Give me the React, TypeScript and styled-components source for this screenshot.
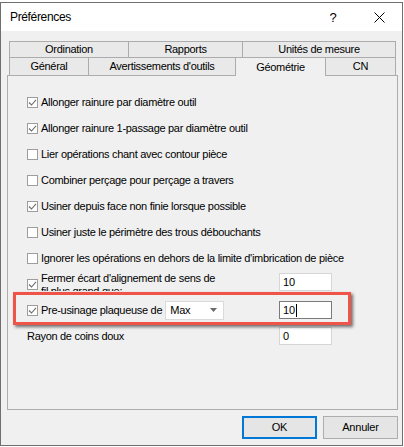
import React from "react";
import styled, { createGlobalStyle } from "styled-components";

const Global = createGlobalStyle`
  html, body { margin: 0; padding: 0; background: #ffffff; }
  body { font-family: "Liberation Sans", Arial, sans-serif; }
  * { box-sizing: border-box; }
`;

const Window = styled.div`
  position: relative;
  margin-top: 2px;
  width: 403px;
  height: 444px;
  border: 1px solid #6f6f6f;
  background: #f0f0f0;
  display: flex;
  flex-direction: column;
  font-family: "Liberation Sans", Arial, sans-serif;
  color: #000;
`;

const TitleBar = styled.div`
  height: 28px;
  background: #ffffff;
  display: flex;
  align-items: center;
  padding-left: 9px;
`;

const Title = styled.div`
  flex: 1;
  font-size: 12px;
  letter-spacing: -0.35px;
  padding-bottom: 1px;
`;

const TitleButton = styled.div`
  width: 46px;
  height: 28px;
  display: flex;
  align-items: center;
  justify-content: center;
  font-size: 13px;
  color: #000;
`;

const Content = styled.div`
  flex: 1;
  display: flex;
  flex-direction: column;
  padding: 10px 4px 0 6px;
`;

const TabStrip = styled.div`
  margin: 0 2px;
  display: flex;
  flex-direction: column;
`;

const TabRow = styled.div<{ $h: number }>`
  display: flex;
  height: ${(p) => p.$h}px;
`;

const Tab = styled.div<{ $w: number; $active?: boolean; $last?: boolean }>`
  position: relative;
  z-index: ${(p) => (p.$active ? 2 : 1)};
  width: ${(p) => p.$w}px;
  border-top: 1px solid #acacac;
  border-left: 1px solid #acacac;
  border-right: ${(p) => (p.$last ? "1px solid #acacac" : "none")};
  background: ${(p) => (p.$active ? "#f0f0f0" : "#e9e9e9")};
  margin-bottom: ${(p) => (p.$active ? "-1px" : "0")};
  display: flex;
  align-items: center;
  justify-content: center;
  font-size: 11px;
  letter-spacing: -0.3px;
  padding-bottom: 1px;
`;

const Panel = styled.div`
  height: 335px;
  border: 1px solid #adadad;
  background: #f0f0f0;
  padding: 13px 0 0 19px;
  display: flex;
  flex-direction: column;
`;

const Row = styled.div`
  height: 26px;
  display: grid;
  grid-template-columns: 252px 53px;
  align-items: center;
`;

const Cell = styled.div<{ $span?: boolean }>`
  display: flex;
  align-items: center;
  height: 100%;
  grid-column: ${(p) => (p.$span ? "1 / span 2" : "auto")};
`;

const Box = styled.span`
  width: 11px;
  height: 11px;
  border: 1px solid #9d9d9d;
  background: #ffffff;
  flex: none;
  margin-right: 3px;
  display: flex;
  align-items: center;
  justify-content: center;
`;

const Label = styled.span`
  font-size: 11px;
  letter-spacing: -0.3px;
  white-space: nowrap;
  padding-bottom: 1px;
`;

const WrapLabel = styled.span`
  align-self: flex-start;
  margin-top: 1px;
  width: 178px;
  height: 19px;
  overflow: hidden;
  font-size: 11px;
  letter-spacing: -0.3px;
  line-height: 13px;
`;

const TextInput = styled.div<{ $focused?: boolean; $start?: boolean }>`
  width: 53px;
  height: 18px;
  align-self: ${(p) => (p.$start ? "start" : "center")};
  margin-top: ${(p) => (p.$start ? "2px" : "0")};
  background: #ffffff;
  border: 1px solid ${(p) => (p.$focused ? "#7a7a7a" : "#d6d6d6")};
  display: flex;
  align-items: center;
  padding-left: 3px;
  font-size: 11px;
  letter-spacing: -0.2px;
`;

const Caret = styled.span`
  display: inline-block;
  width: 1px;
  height: 13px;
  background: #000;
  margin-left: 1px;
`;

const Select = styled.div`
  width: 59px;
  height: 19px;
  margin-left: 3px;
  background: #ffffff;
  border: 1px solid #dadada;
  display: flex;
  align-items: center;
  justify-content: space-between;
  padding: 0 6px 0 4px;
  font-size: 11px;
  letter-spacing: -0.2px;
`;

const Highlight = styled.div`
  position: absolute;
  left: 12px;
  top: 289px;
  width: 338px;
  height: 33px;
  border: 3px solid #ef5449;
  box-shadow: 2px 2px 3px rgba(0, 0, 0, 0.55);
  pointer-events: none;
`;

const ButtonBar = styled.div`
  display: flex;
  justify-content: flex-end;
  gap: 6px;
  margin-top: 6px;
`;

const Button = styled.div<{ $default?: boolean }>`
  width: 75px;
  height: 23px;
  background: #e5e5e5;
  border: 1px solid ${(p) => (p.$default ? "#0078d7" : "#adadad")};
  box-shadow: ${(p) => (p.$default ? "inset 0 0 0 1px #0078d7" : "none")};
  display: flex;
  align-items: center;
  justify-content: center;
  font-size: 11px;
  letter-spacing: -0.2px;
  padding-bottom: 1px;
`;

const Check = ({ checked }: { checked: boolean }) => (
  <Box>
    {checked && (
      <svg width="9" height="9" viewBox="0 0 9 9">
        <polyline
          points="1,4.5 3.5,7 8,1.8"
          fill="none"
          stroke="#6b6b6b"
          strokeWidth="1.1"
        />
      </svg>
    )}
  </Box>
);

const simpleRows: { text: string; checked: boolean }[] = [
  { text: "Allonger rainure par diamètre outil", checked: true },
  { text: "Allonger rainure 1-passage par diamètre outil", checked: true },
  { text: "Lier opérations chant avec contour pièce", checked: false },
  { text: "Combiner perçage pour perçage a travers", checked: false },
  { text: "Usiner depuis face non finie lorsque possible", checked: true },
  { text: "Usiner juste le périmètre des trous débouchants", checked: false },
  {
    text: "Ignorer les opérations en dehors de la limite d'imbrication de pièce",
    checked: false,
  },
];

export default function App() {
  return (
    <>
      <Global />
      <Window>
        <TitleBar>
          <Title>Préférences</Title>
          <TitleButton>?</TitleButton>
          <TitleButton>
            <svg width="11" height="11" viewBox="0 0 11 11">
              <path d="M0.5 0.5 L10.5 10.5 M10.5 0.5 L0.5 10.5" stroke="#000" strokeWidth="1" />
            </svg>
          </TitleButton>
        </TitleBar>
        <Content>
          <TabStrip>
            <TabRow $h={16}>
              <Tab $w={119}>Ordination</Tab>
              <Tab $w={114}>Rapports</Tab>
              <Tab $w={154} $last>Unités de mesure</Tab>
            </TabRow>
            <TabRow $h={18}>
              <Tab $w={79}>Général</Tab>
              <Tab $w={147}>Avertissements d'outils</Tab>
              <Tab $w={90} $active>Géométrie</Tab>
              <Tab $w={71} $last>CN</Tab>
            </TabRow>
          </TabStrip>
          <Panel>
            {simpleRows.map((r) => (
              <Row key={r.text}>
                <Cell $span>
                  <Check checked={r.checked} />
                  <Label>{r.text}</Label>
                </Cell>
              </Row>
            ))}
            <Row>
              <Cell>
                <Check checked />
                <WrapLabel>Fermer écart d'alignement de sens de fil plus grand que:</WrapLabel>
              </Cell>
              <TextInput $start>10</TextInput>
            </Row>
            <Row>
              <Cell>
                <Check checked />
                <Label>Pre-usinage plaqueuse de</Label>
                <Select>
                  <span>Max</span>
                  <svg width="7" height="4" viewBox="0 0 7 4">
                    <path d="M0 0 L7 0 L3.5 4 Z" fill="#6a6a6a" />
                  </svg>
                </Select>
              </Cell>
              <TextInput $focused>
                10
                <Caret />
              </TextInput>
            </Row>
            <Row>
              <Cell>
                <Label>Rayon de coins doux</Label>
              </Cell>
              <TextInput>0</TextInput>
            </Row>
          </Panel>
          <ButtonBar>
            <Button $default>OK</Button>
            <Button>Annuler</Button>
          </ButtonBar>
        </Content>
        <Highlight />
      </Window>
    </>
  );
}
